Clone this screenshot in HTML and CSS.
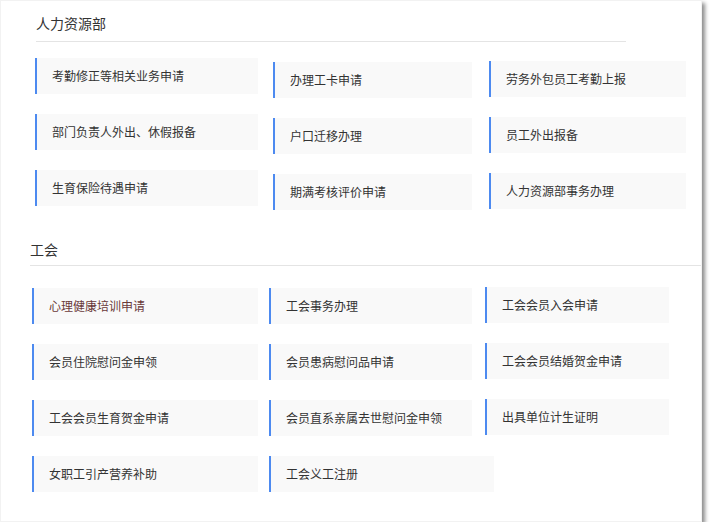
FILE: index.html
```html
<!DOCTYPE html>
<html lang="zh-CN">
<head>
<meta charset="utf-8">
<title>人力资源部 / 工会</title>
<link rel="stylesheet" href="styles.css">
</head>
<body>
<div class="panel">
  <section class="sec sec-hr">
    <h2 class="sec-title">人力资源部</h2>
    <div class="grid">
      <div class="col c1">
        <div class="card">考勤修正等相关业务申请</div>
        <div class="card">部门负责人外出、休假报备</div>
        <div class="card">生育保险待遇申请</div>
      </div>
      <div class="col c2">
        <div class="card">办理工卡申请</div>
        <div class="card">户口迁移办理</div>
        <div class="card">期满考核评价申请</div>
      </div>
      <div class="col c3">
        <div class="card">劳务外包员工考勤上报</div>
        <div class="card">员工外出报备</div>
        <div class="card">人力资源部事务办理</div>
      </div>
    </div>
  </section>
  <section class="sec sec-union">
    <h2 class="sec-title">工会</h2>
    <div class="grid">
      <div class="col c1">
        <div class="card active">心理健康培训申请</div>
        <div class="card">会员住院慰问金申领</div>
        <div class="card">工会会员生育贺金申请</div>
        <div class="card">女职工引产营养补助</div>
      </div>
      <div class="col c2">
        <div class="card">工会事务办理</div>
        <div class="card">会员患病慰问品申请</div>
        <div class="card">会员直系亲属去世慰问金申领</div>
        <div class="card wide">工会义工注册</div>
      </div>
      <div class="col c3">
        <div class="card">工会会员入会申请</div>
        <div class="card">工会会员结婚贺金申请</div>
        <div class="card">出具单位计生证明</div>
      </div>
    </div>
  </section>
</div>
</body>
</html>
```
FILE: styles.css
```css
html, body {
  margin: 0;
  padding: 0;
  background: #ffffff;
}

body {
  font-family: "Noto Sans CJK SC", "Microsoft YaHei", sans-serif;
  color: #333333;
}

.panel {
  width: 702px;
  height: 522px;
  box-sizing: border-box;
  border: 1px solid #f2f2f2;
  background: #ffffff;
  padding-top: 12px;
  box-shadow: 3px 3px 4px rgba(0, 0, 0, 0.45);
}

.sec-title {
  margin: 0;
  font-size: 14px;
  font-weight: normal;
  line-height: 20px;
  color: #333333;
  border-bottom: 1px solid #e4e4e4;
}

.sec-hr .sec-title {
  margin: 0 75px 0 35px;
  padding-bottom: 8px;
}

.sec-union {
  margin-top: 29px;
}

.sec-union .sec-title {
  margin: 0 0 0 29px;
  padding-bottom: 6px;
}

.grid {
  display: flex;
  align-items: flex-start;
}

.sec-hr .grid {
  margin: 16px 0 0 34px;
}

.sec-union .grid {
  margin: 21px 0 0 31px;
}

.col {
  display: flex;
  flex-direction: column;
  align-items: flex-start;
  gap: 20px;
  flex: none;
}

.card {
  box-sizing: border-box;
  height: 36px;
  line-height: 36px;
  background: #f9f9f9;
  border-left: 2px solid #4d8af0;
  padding-left: 15px;
  font-size: 12px;
  color: #333333;
  white-space: nowrap;
  flex: none;
}

.card.active {
  color: #6a3a3a;
}

/* 人力资源部 columns */
.sec-hr .c1 { width: 223px; }
.sec-hr .c1 .card { width: 223px; }
.sec-hr .c2 { width: 199px; margin: 4px 0 0 15px; }
.sec-hr .c2 .card { width: 199px; }
.sec-hr .c3 { width: 197px; margin: 3px 0 0 17px; }
.sec-hr .c3 .card { width: 197px; }

/* 工会 columns */
.sec-union .c1 { width: 226px; margin-top: 1px; }
.sec-union .c1 .card { width: 226px; }
.sec-union .c2 { width: 203px; margin: 1px 0 0 11px; }
.sec-union .c2 .card { width: 203px; }
.sec-union .c2 .card.wide { width: 225px; }
.sec-union .c3 { width: 184px; margin: 0 0 0 13px; }
.sec-union .c3 .card { width: 184px; }
```
